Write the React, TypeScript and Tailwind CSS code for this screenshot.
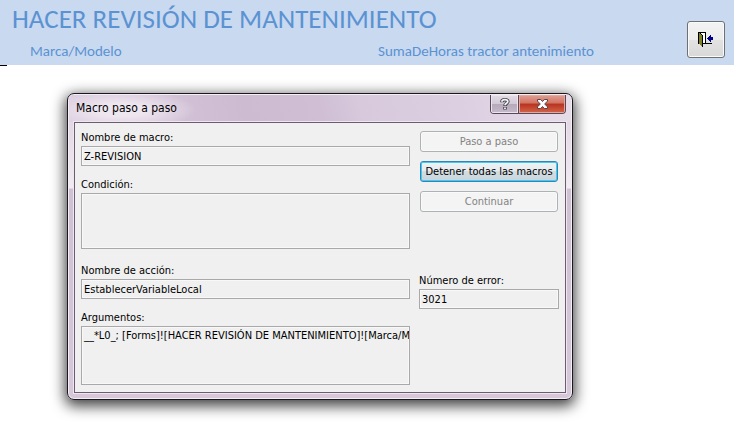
import { ReactNode } from 'react';

const boxClass = 'block w-full resize-none overflow-hidden border border-[#a9a9a9] bg-[#f0f0f0] px-[2px] leading-[18px] shadow-[inset_0_0_0_1px_#f8f8f8] outline-none';

function Field({ id, label, value, box }: { id: string; label: string; value: string; box?: string }) {
  return (
    <div>
      <label htmlFor={id} className="block h-4 leading-4 whitespace-nowrap">{label}</label>
      {box ? (
        <textarea id={id} readOnly wrap="off" defaultValue={value} className={`${boxClass} ${box}`} />
      ) : (
        <input id={id} readOnly defaultValue={value} className={`${boxClass} h-5`} />
      )}
    </div>
  );
}

function MacroButton({ children, disabled }: { children: ReactNode; disabled?: boolean }) {
  return (
    <button
      type="button"
      disabled={disabled}
      className={
        disabled
          ? 'h-[21px] rounded-[3px] border border-[#adb2b5] bg-[#f4f4f4] leading-[18px] whitespace-nowrap text-[#838383] shadow-[inset_0_0_0_1px_#fafafa]'
          : 'h-[21px] rounded-[3px] border border-[#2f87b5] bg-[linear-gradient(#f0f2f3,#e6ebee_50%,#d3dde2_50%,#c6d6de)] leading-[18px] whitespace-nowrap text-black shadow-[inset_0_0_0_1px_#48c8ee]'
      }
    >
      {children}
    </button>
  );
}

function ExitIcon() {
  return (
    <svg width="18" height="18" viewBox="0 0 18 18" shapeRendering="crispEdges" aria-hidden="true">
      <path d="M2 2h7v11H2z" fill="#fff" />
      <path d="M1 1h8v12H8V2H1z" fill="#000" />
      <path d="M1 12h14v1H1z" fill="#000" />
      <path d="M1 1h1v1h2v1h1v1h1v12H5v-1H4v-1H3v-1H1z" fill="#000" />
      <path d="M2 2h1v1h1v1h1v11H4v-1H3v-1H2z" fill="#80802a" />
      <path d="M10 7h1V6h1V5h1V4h1v2h2v3h-2v2h-1v-1h-1V9h-1V8h-1z" fill="#00008b" />
    </svg>
  );
}

function HelpIcon() {
  return (
    <svg width="12" height="14" viewBox="0 0 12 14" fill="none" aria-hidden="true">
      <path d="M3 5.2V4.4C3 3.2 4.2 2.7 5.8 2.7S8.8 3.2 8.8 4.6C8.8 6.3 6 6.3 6 8.9M6 10v2.6" stroke="#45454f" strokeWidth="3.6" />
      <path d="M3 4.8V4.4C3 3.2 4.2 2.7 5.8 2.7S8.8 3.2 8.8 4.6C8.8 6.3 6 6.3 6 8.3M6 10.4v1.6" stroke="#f4f4f6" strokeWidth="1.8" />
    </svg>
  );
}

function CloseIcon() {
  return (
    <svg width="13" height="12" viewBox="0 0 13 12" aria-hidden="true">
      <path d="M1.5 1.5h3.2l1.8 2 1.8-2h3.2v1.6L8.7 6l2.8 2.9v1.6H8.3l-1.8-2-1.8 2H1.5V8.9L4.3 6 1.5 3.1z" fill="#fff" stroke="#55464f" />
    </svg>
  );
}

export default function App() {
  return (
    <div className="min-h-screen bg-white">
      <header className="flex justify-between bg-[#c8d9f0] pr-[9px] pl-3 font-[Carlito,Lato,sans-serif] text-[#5b92d2]">
        <div className="min-w-0 grow">
          <h1 className="h-[38px] text-[27px] leading-[37px] whitespace-nowrap">HACER REVISIÓN DE MANTENIMIENTO</h1>
          <div className="flex h-[27px] pl-[18px] text-[15px] leading-[27px] whitespace-nowrap">
            <span className="w-[348px]">Marca/Modelo</span>
            <span className="w-[134px]">SumaDeHoras tractor</span>
            <span className="flex w-[82px] justify-end overflow-hidden">antenimiento</span>
          </div>
        </div>
        <button
          type="button"
          aria-label="Salir"
          className="mt-[21px] flex h-[37px] w-[38px] shrink-0 items-center justify-center rounded-[3px] border border-[#707070] bg-[linear-gradient(#f3f3f3,#ececec_50%,#e2e2e2_50%,#d8d8d8)] shadow-[inset_0_0_0_1px_#fafafa]"
        >
          <ExitIcon />
        </button>
      </header>
      <div className="h-px w-[7px] bg-black" />

      <main className="px-[67px] pt-[27px]">
        <section
          aria-labelledby="dialog-title"
          className="w-full max-w-[506px] rounded-[7px] border border-[#1c1820] bg-[linear-gradient(#dccfde_0px,#f1ebf2_94px,#cfc0d2_95px,#d6c8d9_100%)] px-[6px] pb-[6px] font-['DejaVu_Sans_Condensed','DejaVu_Sans',sans-serif] text-[11px] text-black shadow-[inset_0_0_0_1px_#f4eef5,0_4px_14px_2px_rgba(0,0,0,0.75)]"
        >
          <div className="-mx-[5px] mt-px flex h-[27px] justify-between rounded-t-[5px] bg-[radial-gradient(ellipse_75px_20px_at_52px_15px,#efe7f0_30%,transparent),linear-gradient(75deg,#dccde0,#cdbbd1_35%,#cfbed4_50%,#d8c9dd_58%,#ddd0e2_80%,#e6dde9)] pr-[5px] pl-[7px]">
            <h2 id="dialog-title" className="text-[12px] leading-[27px]">Macro paso a paso</h2>
            <div className="flex h-[19px] overflow-hidden rounded-b-[4px] border border-t-0 border-[#56495a]">
              <button
                type="button"
                aria-label="Ayuda"
                className="flex w-[28px] items-center justify-center border-r border-[#56495a] bg-[linear-gradient(#e3dce6,#d3cad7_48%,#b5a9ba_50%,#c6bbca)] shadow-[inset_0_0_0_1px_#ece5ee]"
              >
                <HelpIcon />
              </button>
              <button
                type="button"
                aria-label="Cerrar"
                className="flex w-[46px] items-center justify-center bg-[linear-gradient(#e0a093,#d27363_45%,#b8331f_50%,#d4654a)] shadow-[inset_0_0_0_1px_#e7a79b]"
              >
                <CloseIcon />
              </button>
            </div>
          </div>

          <div className="grid grid-cols-[1fr_140px] gap-[9px] border border-[#6b5d6f] bg-[#f0f0f0] px-[6px] py-[7px] shadow-[0_0_0_1px_#eee6f0]">
            <div className="flex flex-col gap-[11px]">
              <Field id="macro" label="Nombre de macro:" value="Z-REVISION" />
              <Field id="condition" label="Condición:" value="" box="mb-[3px] h-[56px]" />
              <Field id="action" label="Nombre de acción:" value="EstablecerVariableLocal" />
              <Field
                id="args"
                label="Argumentos:"
                value="__*L0_; [Forms]![HACER REVISIÓN DE MANTENIMIENTO]![Marca/Modelo]"
                box="h-[59px]"
              />
            </div>
            <div className="pt-px">
              <div className="mb-[61px] flex flex-col gap-[9px] px-px">
                <MacroButton disabled>Paso a paso</MacroButton>
                <MacroButton>Detener todas las macros</MacroButton>
                <MacroButton disabled>Continuar</MacroButton>
              </div>
              <Field id="error" label="Número de error:" value="3021" />
            </div>
          </div>
        </section>
      </main>
    </div>
  );
}
